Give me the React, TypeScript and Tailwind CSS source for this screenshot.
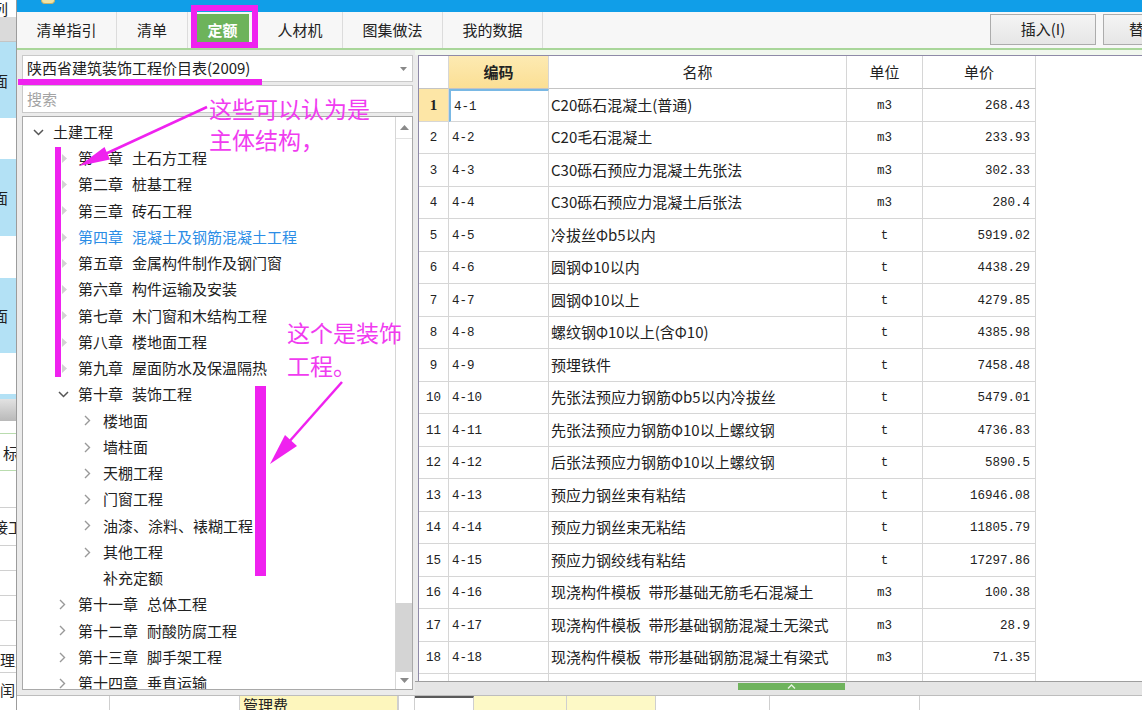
import React from 'react';

type Icon = 'down' | 'right' | 'tri' | 'none';
type TreeNode = { label: string; level: 0 | 1 | 2; icon: Icon; active?: boolean };

const CJK = "font-['Noto_Sans_CJK_SC',sans-serif]";
const MONO = "font-['Liberation_Mono',monospace] pt-[3px]";

const TREE: TreeNode[] = [
  { label: '土建工程', level: 0, icon: 'down' },
  { label: '第一章 土石方工程', level: 1, icon: 'tri' },
  { label: '第二章 桩基工程', level: 1, icon: 'tri' },
  { label: '第三章 砖石工程', level: 1, icon: 'tri' },
  { label: '第四章 混凝土及钢筋混凝土工程', level: 1, icon: 'tri', active: true },
  { label: '第五章 金属构件制作及钢门窗', level: 1, icon: 'tri' },
  { label: '第六章 构件运输及安装', level: 1, icon: 'tri' },
  { label: '第七章 木门窗和木结构工程', level: 1, icon: 'tri' },
  { label: '第八章 楼地面工程', level: 1, icon: 'tri' },
  { label: '第九章 屋面防水及保温隔热', level: 1, icon: 'tri' },
  { label: '第十章 装饰工程', level: 1, icon: 'down' },
  { label: '楼地面', level: 2, icon: 'right' },
  { label: '墙柱面', level: 2, icon: 'right' },
  { label: '天棚工程', level: 2, icon: 'right' },
  { label: '门窗工程', level: 2, icon: 'right' },
  { label: '油漆、涂料、裱糊工程', level: 2, icon: 'right' },
  { label: '其他工程', level: 2, icon: 'right' },
  { label: '补充定额', level: 2, icon: 'none' },
  { label: '第十一章 总体工程', level: 1, icon: 'right' },
  { label: '第十二章 耐酸防腐工程', level: 1, icon: 'right' },
  { label: '第十三章 脚手架工程', level: 1, icon: 'right' },
  { label: '第十四章 垂直运输', level: 1, icon: 'right' },
];

const LEVEL_PAD = ['pl-[9px]', 'pl-[34px]', 'pl-[59px]'];

// [code, name, unit, price]
const ROWS: [string, string, string, string][] = [
  ['4-1', 'C20砾石混凝土(普通)', 'm3', '268.43'],
  ['4-2', 'C20毛石混凝土', 'm3', '233.93'],
  ['4-3', 'C30砾石预应力混凝土先张法', 'm3', '302.33'],
  ['4-4', 'C30砾石预应力混凝土后张法', 'm3', '280.4'],
  ['4-5', '冷拔丝Φb5以内', 't', '5919.02'],
  ['4-6', '圆钢Φ10以内', 't', '4438.29'],
  ['4-7', '圆钢Φ10以上', 't', '4279.85'],
  ['4-8', '螺纹钢Φ10以上(含Φ10)', 't', '4385.98'],
  ['4-9', '预埋铁件', 't', '7458.48'],
  ['4-10', '先张法预应力钢筋Φb5以内冷拔丝', 't', '5479.01'],
  ['4-11', '先张法预应力钢筋Φ10以上螺纹钢', 't', '4736.83'],
  ['4-12', '后张法预应力钢筋Φ10以上螺纹钢', 't', '5890.5'],
  ['4-13', '预应力钢丝束有粘结', 't', '16946.08'],
  ['4-14', '预应力钢丝束无粘结', 't', '11805.79'],
  ['4-15', '预应力钢绞线有粘结', 't', '17297.86'],
  ['4-16', '现浇构件模板\u2002带形基础无筋毛石混凝土', 'm3', '100.38'],
  ['4-17', '现浇构件模板\u2002带形基础钢筋混凝土无梁式', 'm3', '28.9'],
  ['4-18', '现浇构件模板\u2002带形基础钢筋混凝土有梁式', 'm3', '71.35'],
];

const TABS = ['清单指引', '清单', '定额', '人材机', '图集做法', '我的数据'];
const TAB_W = ['w-[100px]', 'w-[71px]', 'w-[70px]', 'w-[85px]', 'w-[100px]', 'w-[100px]'];

function TreeIcon({ icon }: { icon: Icon }) {
  if (icon === 'down')
    return (
      <svg width="11" height="7" className="ml-[1px]">
        <polyline points="1,1 5.5,5.5 10,1" fill="none" stroke="#555" strokeWidth="1.5" />
      </svg>
    );
  if (icon === 'right')
    return (
      <svg width="7" height="11" className="ml-[2px]">
        <polyline points="1,1 5.5,5.5 1,10" fill="none" stroke="#999" strokeWidth="1.4" />
      </svg>
    );
  if (icon === 'tri')
    return (
      <svg width="6" height="9" className="ml-[5px]">
        <polygon points="0,0 5,4.5 0,9" fill="#d2d2d2" />
      </svg>
    );
  return null;
}

function LeftStrip() {
  const cut = 'block -ml-[7px] whitespace-nowrap';
  return (
    <div className={`w-[17px] shrink-0 flex flex-col border-r border-[#9c9c9c] overflow-hidden text-[15px] leading-[15px] text-[#222] ${CJK}`}>
      <div className="h-[17px] bg-white pt-[1px]"><span className={cut}>列</span></div>
      <div className="h-[25px] bg-[#dadada] border-b border-[#c4c4c4]" />
      <div className="h-[76px] bg-[#b3e1f5] flex items-center"><span className={cut}>面</span></div>
      <div className="h-[41px] bg-white flex items-center pt-[14px]"><span className={cut}>：</span></div>
      <div className="h-[77px] bg-[#b3e1f5] flex items-center"><span className={cut}>面</span></div>
      <div className="h-[42px] bg-white flex items-center pt-[12px]"><span className={cut}>：</span></div>
      <div className="h-[75px] bg-[#b3e1f5] flex items-center"><span className={cut}>面</span></div>
      <div className="h-[41px] bg-white flex items-center pt-[16px]"><span className={cut}>：</span></div>
      <div className="h-[5px] bg-[#b3e1f5]" />
      <div className="h-[22px] bg-gradient-to-b from-[#e2e2e2] to-[#b9b9b9]" />
      <div className="h-[13px] bg-white border-b border-[#b9dcae]" />
      <div className="h-[37px] bg-white border-b border-[#b9dcae] flex items-center"><span className="block ml-[3px]">标</span></div>
      <div className="h-[37px] bg-white border-b border-[#d0d0d0] flex items-start pt-[4px]"><span className={cut}>：</span></div>
      <div className="h-[38px] bg-white border-b border-[#d0d0d0] flex items-center"><span className={cut}>接工</span></div>
      <div className="h-[25px] bg-white border-b border-[#d0d0d0]" />
      <div className="h-[25px] bg-white border-b border-[#d0d0d0]" />
      <div className="h-[25px] bg-white border-b border-[#d0d0d0]" />
      <div className="h-[25px] bg-white border-b border-[#d0d0d0]" />
      <div className="h-[27px] bg-white border-b border-[#d0d0d0] flex items-center"><span className="block whitespace-nowrap">理费</span></div>
      <div className="h-[33px] bg-white flex items-center"><span className="block whitespace-nowrap">闰</span></div>
    </div>
  );
}

function TabBar() {
  return (
    <div className={`h-[38px] shrink-0 flex bg-[#f7f7f7] border-b-2 border-[#a9d69a] overflow-hidden text-[15px] text-[#222] ${CJK}`}>
      {TABS.map((t, i) => (
        <div key={t} className={`${TAB_W[i]} shrink-0 flex items-center justify-center border-r border-[#dcdcdc]`}>
          {t === '定额' ? (
            <span className="w-[52px] h-[32px] bg-[#6db35b] text-white font-bold flex items-center justify-center">{t}</span>
          ) : (
            t
          )}
        </div>
      ))}
      <div className="ml-auto flex gap-[7px] self-start mt-[2px]">
        <div className="w-[106px] h-[31px] border border-[#acacac] bg-gradient-to-b from-[#f4f4f4] to-[#e6e6e6] flex items-center justify-center">
          插入(I)
        </div>
        <div className="w-[39px] h-[31px] border-y border-l border-[#acacac] bg-gradient-to-b from-[#f4f4f4] to-[#e6e6e6] flex items-center pl-[25px] whitespace-nowrap overflow-hidden">
          替换
        </div>
      </div>
    </div>
  );
}

function LeftPanel() {
  return (
    <div className={`w-[398px] shrink-0 flex flex-col bg-[#ebebeb] pt-[5px] pl-[5px] pr-[2px] pb-[5px] text-[15px] text-[#222] ${CJK}`}>
      <div className="h-[27px] shrink-0 bg-white border border-[#c9c9c9] flex items-center pl-[4px] pr-[5px]">
        <span className="flex-1 whitespace-nowrap">陕西省建筑装饰工程价目表(2009)</span>
        <svg width="7" height="4">
          <polygon points="0,0 7,0 3.5,4" fill="#888" />
        </svg>
      </div>
      <div className="h-[28px] shrink-0 mt-[3px] bg-white border border-[#c9c9c9] flex items-center pl-[4px] text-[#a3a3a3]">
        搜索
      </div>
      <div className="flex-1 min-h-0 mt-[3px] bg-white border border-[#a9a9a9] flex">
        <div className="flex-1 min-w-0 overflow-hidden pt-[2px]">
          {TREE.map((n) => {
            const parts = n.label.split(' ');
            return (
              <div
                key={n.label}
                className={`h-[26.25px] flex items-center whitespace-nowrap ${LEVEL_PAD[n.level]} ${n.active ? 'text-[#2b8de6]' : ''}`}
              >
                <div className="w-[21px] shrink-0 flex items-center">
                  <TreeIcon icon={n.icon} />
                </div>
                <span>{parts[0]}</span>
                {parts[1] && <span className="ml-[9px]">{parts[1]}</span>}
              </div>
            );
          })}
        </div>
        <div className="w-[17px] shrink-0 border-l border-[#d6d6d6] flex flex-col">
          <div className="h-[22px] flex items-center justify-center border-b border-[#e2e2e2]">
            <svg width="9" height="5">
              <polygon points="0,5 9,5 4.5,0" fill="#8a8a8a" />
            </svg>
          </div>
          <div className="flex-1 bg-white" />
          <div className="h-[69px] bg-[#d4d4d4]" />
          <div className="h-[17px] flex items-center justify-center">
            <svg width="9" height="5">
              <polygon points="0,0 9,0 4.5,5" fill="#8a8a8a" />
            </svg>
          </div>
        </div>
      </div>
    </div>
  );
}

const COLS = 'grid grid-cols-[30px_100px_298px_76px_113px]';
const CELL = 'border-r border-b border-[#d6d6d6] flex items-center';

function Table() {
  return (
    <div className="flex-1 min-w-0 flex flex-col bg-[#ececec]">
      <div className="h-[5px] shrink-0 bg-[#f1f7ee]" />
      <div className="flex-1 min-h-0 ml-[3px] border-l border-t border-[#8f8aa8] bg-white overflow-hidden">
        <div className={`${COLS} h-[33px] text-[15px] text-[#222] ${CJK}`}>
          <div className={`${CELL} border-b-[#c4c4c4]`} />
          <div className={`${CELL} border-b-[#c4c4c4] justify-center font-bold bg-gradient-to-b from-[#fdeab2] to-[#fbdf94]`}>编码</div>
          <div className={`${CELL} border-b-[#c4c4c4] justify-center`}>名称</div>
          <div className={`${CELL} border-b-[#c4c4c4] justify-center`}>单位</div>
          <div className={`${CELL} border-b-[#c4c4c4] justify-center`}>单价</div>
        </div>
        {ROWS.map(([code, name, unit, price], i) => (
          <div key={code} className={`${COLS} h-[32.5px] text-[#222]`}>
            {i === 0 ? (
              <div className={`${CELL} justify-center bg-[#fde6a6] font-['Liberation_Serif',serif] font-bold text-[15px]`}>1</div>
            ) : (
              <div className={`${CELL} justify-center ${MONO} text-[12.5px]`}>{i + 1}</div>
            )}
            <div
              className={`${CELL} pl-[3px] ${MONO} text-[12.5px] ${
                i === 0 ? 'border-2 border-[#5a5a5a] border-t-[#79b8e4] border-l-[#79b8e4]' : ''
              }`}
            >
              {code}
            </div>
            <div className={`${CELL} pl-[2px] text-[15px] whitespace-nowrap overflow-hidden ${CJK}`}>{name}</div>
            <div className={`${CELL} justify-center ${MONO} text-[12.5px]`}>{unit}</div>
            <div className={`${CELL} justify-end pr-[5px] ${MONO} text-[12.5px]`}>{price}</div>
          </div>
        ))}
        <div className={`${COLS} h-[32.5px]`}>
          <div className={CELL} />
          <div className={CELL} />
          <div className={CELL} />
          <div className={CELL} />
          <div className={CELL} />
        </div>
      </div>
      <div className="h-[14px] shrink-0 bg-[#e5e5e5] border-t border-[#9e9e9e]">
        <div className="ml-[323px] mt-[1px] w-[107px] h-[7px] bg-[#6fb35d] flex items-center justify-center">
          <svg width="9" height="5">
            <polyline points="1,4.5 4.5,1 8,4.5" fill="none" stroke="#e9f5e4" strokeWidth="1.3" />
          </svg>
        </div>
      </div>
    </div>
  );
}

function BottomGrid() {
  const c = 'h-full border-r border-[#cfcfcf] shrink-0';
  return (
    <div className={`h-[15px] shrink-0 flex border-t border-[#bdbdbd] bg-white overflow-hidden text-[15px] leading-[15px] text-[#222] ${CJK}`}>
      <div className={`${c} w-[93px]`} />
      <div className={`${c} w-[130px]`} />
      <div className={`${c} w-[158px] bg-[#fdf6bd] pl-[3px] pt-[1px] whitespace-nowrap`}>管理费</div>
      <div className={`${c} w-[17px] border-l border-[#9a9a9a]`} />
      <div className={`${c} w-[59px] border-t-2 border-t-[#5a5a5a]`} />
      <div className={`${c} w-[93px] bg-[#fdf9c6]`} />
      <div className={`${c} w-[89px] bg-[#fdf9c6]`} />
      <div className={`${c} w-[114px]`} />
      <div className={`${c} w-[150px]`} />
      <div className="flex-1 bg-white" />
    </div>
  );
}

function Annotations() {
  const mg = '#ef22ef';
  return (
    <div className="pointer-events-none absolute inset-0">
      <svg width="1142" height="710" className="absolute left-0 top-0">
        <rect x="194" y="8" width="61" height="37" fill="none" stroke={mg} strokeWidth="6" />
        <rect x="18" y="79" width="244" height="6" fill={mg} />
        <rect x="55" y="147" width="6" height="230" fill={mg} />
        <rect x="255" y="386" width="11" height="190" fill={mg} />
        <line x1="207" y1="107" x2="103" y2="155" stroke={mg} strokeWidth="2.5" />
        <polygon points="79,166 110,159.5 104.5,147" fill={mg} />
        <line x1="342" y1="382" x2="288" y2="443" stroke={mg} strokeWidth="2.5" />
        <polygon points="270,464 297,446 285,435" fill={mg} />
      </svg>
      <div className={`absolute left-[209px] top-[93px] text-[23px] leading-[31px] text-[#f03cf0] whitespace-nowrap ${CJK}`}>
        这些可以认为是
        <br />
        主体结构，
      </div>
      <div className={`absolute left-[287px] top-[316px] text-[23px] leading-[33px] text-[#f03cf0] whitespace-nowrap ${CJK}`}>
        这个是装饰
        <br />
        工程。
      </div>
    </div>
  );
}

export default function App() {
  return (
    <div className="relative w-[1142px] h-[710px] overflow-hidden bg-white">
      <div className="flex h-full">
        <LeftStrip />
        <div className="flex-1 min-w-0 flex flex-col">
          <div className="h-[12px] shrink-0 bg-[#109ee8] flex items-start">
            <div className="ml-[24px] w-[14px] h-[4px] rounded-b-[4px] bg-[#efe3a6] border border-t-0 border-[#c9b46a]" />
          </div>
          <TabBar />
          <div className="flex-1 min-h-0 flex">
            <LeftPanel />
            <Table />
          </div>
          <BottomGrid />
        </div>
      </div>
      <Annotations />
    </div>
  );
}
